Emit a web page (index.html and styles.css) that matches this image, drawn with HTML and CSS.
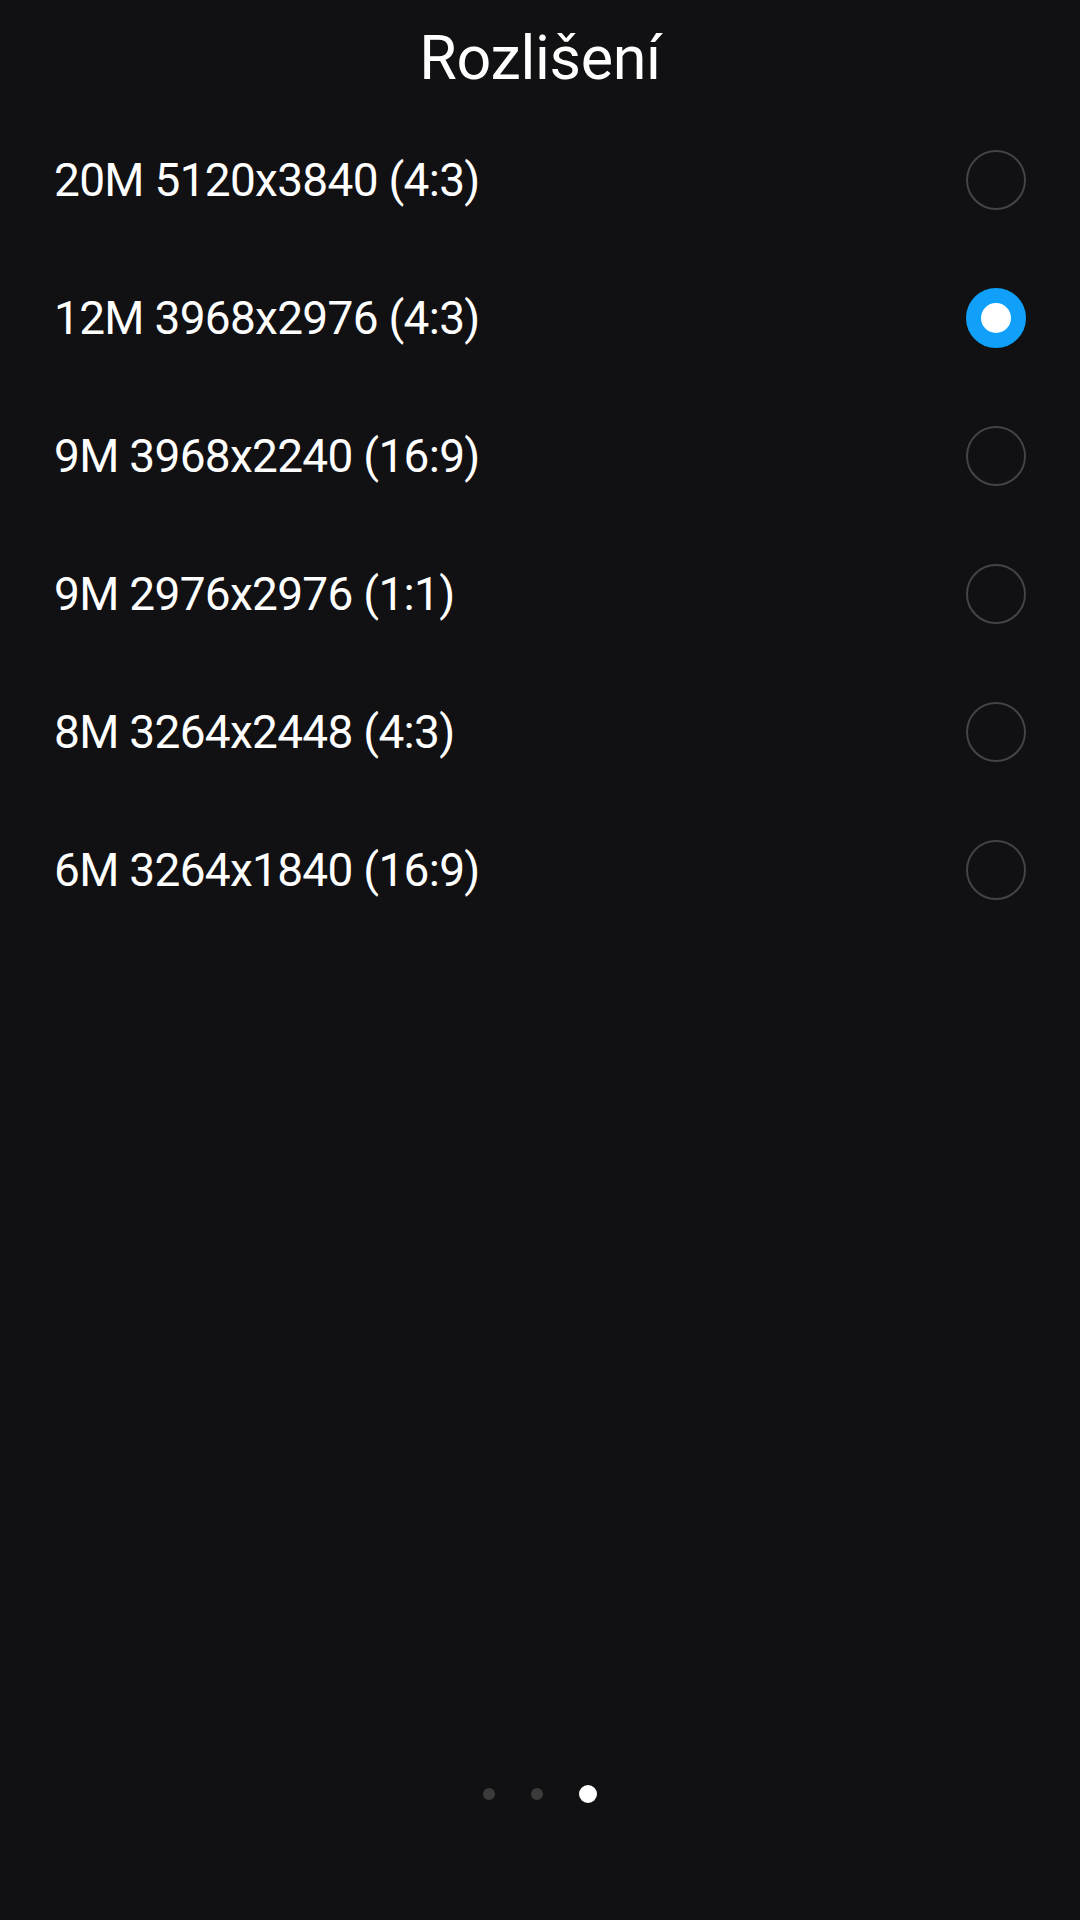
FILE: index.html
```html
<!DOCTYPE html>
<html lang="cs">
<head>
<meta charset="utf-8">
<title>Rozlišení</title>
<link rel="stylesheet" href="styles.css">
</head>
<body>
<div class="screen">
  <header class="title">Rozlišení</header>
  <ul class="options">
    <li class="option"><span class="label">20M 5120x3840 (4:3)</span><span class="radio"></span></li>
    <li class="option"><span class="label">12M 3968x2976 (4:3)</span><span class="radio checked"></span></li>
    <li class="option"><span class="label">9M 3968x2240 (16:9)</span><span class="radio"></span></li>
    <li class="option"><span class="label">9M 2976x2976 (1:1)</span><span class="radio"></span></li>
    <li class="option"><span class="label">8M 3264x2448 (4:3)</span><span class="radio"></span></li>
    <li class="option"><span class="label">6M 3264x1840 (16:9)</span><span class="radio"></span></li>
  </ul>
  <div class="pager">
    <span class="dot"></span>
    <span class="dot"></span>
    <span class="dot active"></span>
  </div>
</div>
</body>
</html>
```
FILE: styles.css
```css
html, body {
  margin: 0;
  padding: 0;
  background: #111012;
}
.screen {
  width: 1080px;
  height: 1920px;
  display: flex;
  flex-direction: column;
  background: #111012;
  color: #ffffff;
  font-family: Roboto, "Noto Sans", sans-serif;
}
.title {
  padding-top: 6px;
  height: 105px;
  line-height: 105px;
  font-size: 61px;
  letter-spacing: -0.3px;
  text-align: center;
  font-weight: 400;
}
.options {
  list-style: none;
  margin: 0;
  padding: 0;
}
.option {
  height: 138px;
  display: flex;
  align-items: center;
  justify-content: space-between;
  padding: 0 54px 0 54px;
}
.label {
  font-size: 46px;
  line-height: 138px;
  letter-spacing: -0.7px;
}
.radio {
  width: 56px;
  height: 56px;
  border: 2px solid #444345;
  border-radius: 50%;
  box-sizing: content-box;
}
.radio.checked {
  width: 30px;
  height: 30px;
  border: 15px solid #10a0fa;
  background: #ffffff;
}
.pager {
  margin-top: auto;
  margin-bottom: 117px;
  display: flex;
  justify-content: center;
  align-items: center;
  gap: 36px;
}
.dot {
  width: 12px;
  height: 12px;
  border-radius: 50%;
  background: #3b3b3b;
}
.dot.active {
  width: 18px;
  height: 18px;
  background: #ffffff;
}
```
